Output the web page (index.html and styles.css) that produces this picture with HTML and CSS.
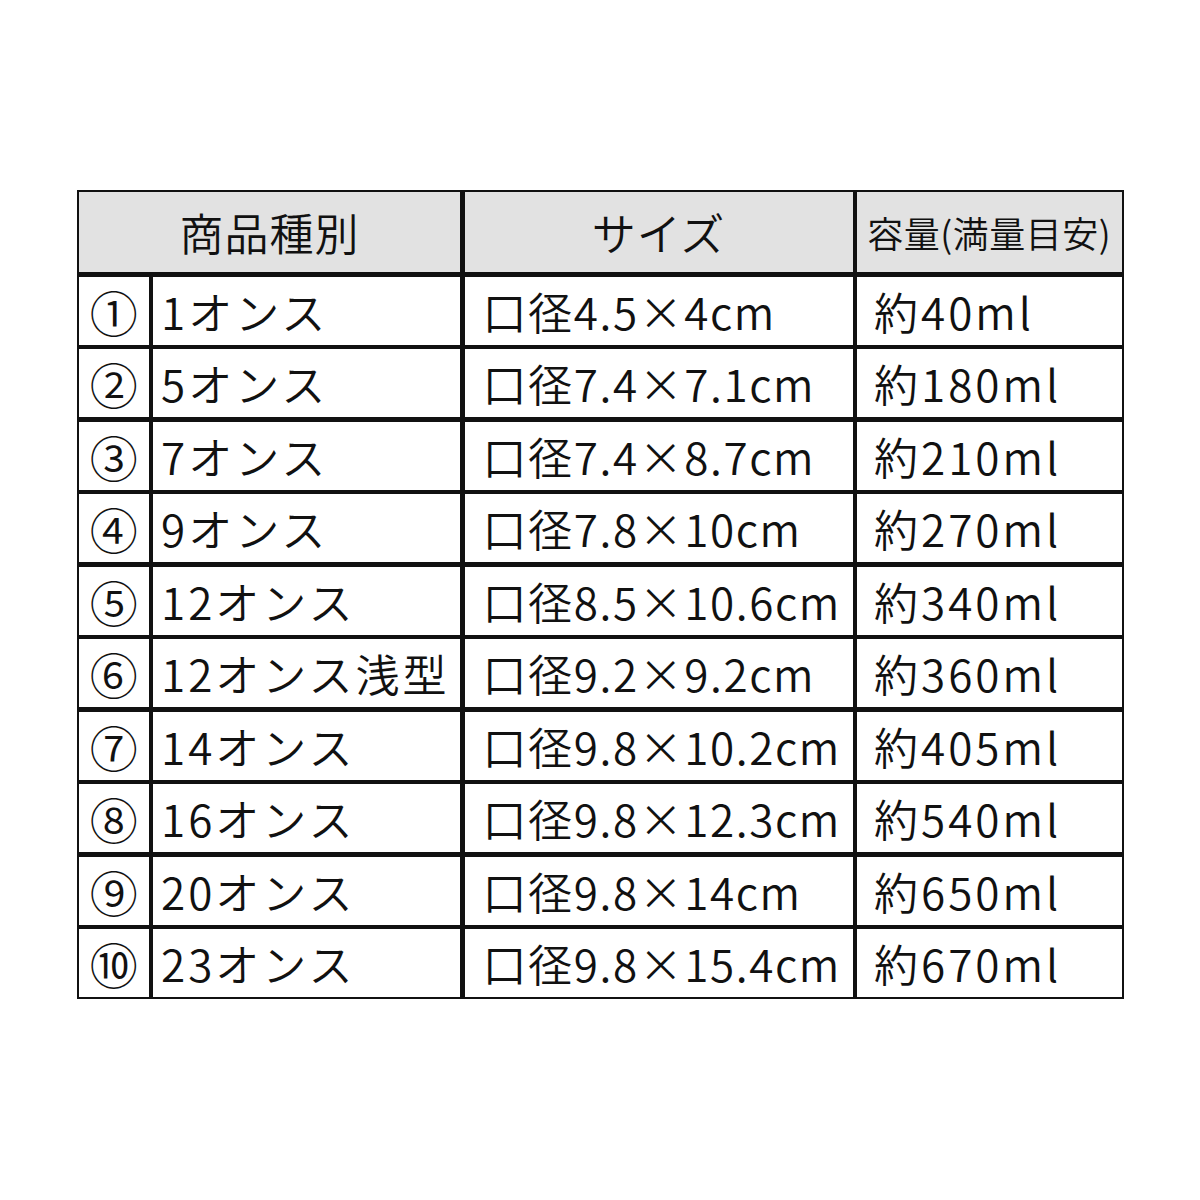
FILE: index.html
```html
<!DOCTYPE html>
<html lang="ja">
<head>
<meta charset="utf-8">
<link rel="stylesheet" href="styles.css">
</head>
<body>
<div class="table">
  <div class="cell head span2">商品種別</div>
  <div class="cell head">サイズ</div>
  <div class="cell head small">容量(満量目安)</div>

  <div class="cell num">①</div><div class="cell name">1オンス</div><div class="cell size">口径4.5×4cm</div><div class="cell cap">約40ml</div>
  <div class="cell num">②</div><div class="cell name">5オンス</div><div class="cell size">口径7.4×7.1cm</div><div class="cell cap">約180ml</div>
  <div class="cell num">③</div><div class="cell name">7オンス</div><div class="cell size">口径7.4×8.7cm</div><div class="cell cap">約210ml</div>
  <div class="cell num">④</div><div class="cell name">9オンス</div><div class="cell size">口径7.8×10cm</div><div class="cell cap">約270ml</div>
  <div class="cell num">⑤</div><div class="cell name">12オンス</div><div class="cell size">口径8.5×10.6cm</div><div class="cell cap">約340ml</div>
  <div class="cell num">⑥</div><div class="cell name">12オンス浅型</div><div class="cell size">口径9.2×9.2cm</div><div class="cell cap">約360ml</div>
  <div class="cell num">⑦</div><div class="cell name">14オンス</div><div class="cell size">口径9.8×10.2cm</div><div class="cell cap">約405ml</div>
  <div class="cell num">⑧</div><div class="cell name">16オンス</div><div class="cell size">口径9.8×12.3cm</div><div class="cell cap">約540ml</div>
  <div class="cell num">⑨</div><div class="cell name">20オンス</div><div class="cell size">口径9.8×14cm</div><div class="cell cap">約650ml</div>
  <div class="cell num">⑩</div><div class="cell name">23オンス</div><div class="cell size">口径9.8×15.4cm</div><div class="cell cap">約670ml</div>
</div>
</body>
</html>
```

FILE: styles.css
```css
html, body {
  margin: 0;
  padding: 0;
  background: #fff;
}

body {
  font-family: "Noto Sans CJK JP", "Noto Sans", sans-serif;
  font-weight: 350;
  color: #111;
}

.table {
  display: grid;
  grid-template-columns: 69.5px 307px 388px 264.5px;
  grid-template-rows: 80px repeat(10, 68px);
  gap: 4.5px;
  padding: 2px 2.5px 2px 2px;
  background: #111;
  width: max-content;
  margin: 190px 0 0 77px;
}

.cell {
  background: #fff;
  display: flex;
  align-items: center;
  font-size: 44px;
  line-height: 1;
  white-space: nowrap;
  overflow: hidden;
}

.head {
  background: #e2e2e2;
  justify-content: center;
  letter-spacing: 1px;
}

.span2 {
  grid-column: span 2;
}

.small {
  font-size: 36px;
  letter-spacing: 0.5px;
}

.num {
  justify-content: center;
  font-size: 48px;
  line-height: 1;
}

.name {
  padding-left: 8px;
  letter-spacing: 3px;
}

.size {
  padding-left: 18px;
  letter-spacing: 1.6px;
}

.cap {
  padding-left: 17px;
  letter-spacing: 3px;
}
```
